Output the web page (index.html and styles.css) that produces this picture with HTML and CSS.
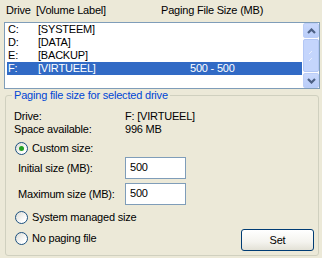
FILE: index.html
```html
<!DOCTYPE html>
<html>
<head>
<meta charset="utf-8">
<link rel="stylesheet" href="styles.css">
</head>
<body>
<div class="header">
  <span class="h1">Drive</span><span class="h2">[Volume Label]</span><span class="h3">Paging File Size (MB)</span>
</div>
<div class="list">
  <div class="rows">
    <div class="row"><span class="c1">C:</span><span class="c2">[SYSTEEM]</span><span class="c3"></span></div>
    <div class="row"><span class="c1">D:</span><span class="c2">[DATA]</span><span class="c3"></span></div>
    <div class="row"><span class="c1">E:</span><span class="c2">[BACKUP]</span><span class="c3"></span></div>
    <div class="row selected"><span class="c1">F:</span><span class="c2">[VIRTUEEL]</span><span class="c3">500 - 500</span></div>
  </div>
  <div class="scrollbar">
    <div class="sbtn"><svg width="9" height="6" viewBox="0 0 9 6"><polyline points="1,5 4.5,1.5 8,5" fill="none" stroke="#4D6185" stroke-width="2.2"/></svg></div>
    <div class="thumb">
      <svg width="6" height="14" viewBox="0 0 6 14"><line x1="1" y1="5" x2="4" y2="2" stroke="#E8EEFD" stroke-width="1"/><line x1="1" y1="12" x2="4" y2="9" stroke="#E8EEFD" stroke-width="1"/></svg>
    </div>
    <div class="sbtn"><svg width="9" height="6" viewBox="0 0 9 6"><polyline points="1,1 4.5,4.5 8,1" fill="none" stroke="#4D6185" stroke-width="2.2"/></svg></div>
  </div>
</div>
<fieldset class="group">
  <legend>Paging file size for selected drive</legend>
  <div class="info"><span class="lbl">Drive:</span><span>F: [VIRTUEEL]</span></div>
  <div class="info"><span class="lbl">Space available:</span><span>996 MB</span></div>
  <div class="radio r-custom"><span class="dot checked"></span><span>Custom size:</span></div>
  <div class="field f-initial"><span class="flbl">Initial size (MB):</span><span class="input">500</span></div>
  <div class="field f-max"><span class="flbl">Maximum size (MB):</span><span class="input">500</span></div>
  <div class="radio r-system"><span class="dot"></span><span>System managed size</span></div>
  <div class="lastrow">
    <div class="radio"><span class="dot"></span><span>No paging file</span></div>
    <div class="button">Set</div>
  </div>
</fieldset>
</body>
</html>
```

FILE: styles.css
```css
html, body {
  margin: 0;
  padding: 0;
}
body {
  width: 322px;
  height: 258px;
  background: #ECE9D8;
  font-family: "Liberation Sans", Arial, sans-serif;
  font-size: 11px;
  line-height: 13px;
  letter-spacing: -0.2px;
  color: #000;
  overflow: hidden;
}
.header {
  display: flex;
  height: 22px;
  padding: 4px 0 0 6px;
  box-sizing: border-box;
}
.h1 { width: 30px; }
.h2 { width: 125px; }
.list {
  display: flex;
  margin-left: 4px;
  width: 316px;
  height: 67px;
  box-sizing: border-box;
  border: 1px solid #7F9DB9;
  background: #fff;
}
.rows {
  flex: 1;
  padding: 0 1px 0 2px;
}
.row {
  display: flex;
  height: 13px;
  padding-left: 1px;
}
.row.selected {
  background: #316AC5;
  color: #fff;
}
.c1 { width: 30px; }
.c2 { width: 152px; }
.scrollbar {
  width: 16px;
  display: flex;
  flex-direction: column;
  gap: 1px;
  background: #FCFCFE;
}
.sbtn {
  height: 15px;
  box-sizing: border-box;
  border: 1px solid #BCCEF8;
  border-radius: 2px;
  background: linear-gradient(#C9D8FC, #B9CDF9);
  display: flex;
  align-items: center;
  justify-content: center;
}
.thumb {
  flex: 1;
  box-sizing: border-box;
  border: 1px solid #B3C7F5;
  border-radius: 2px;
  background: #C4D5FC;
  display: flex;
  align-items: center;
  justify-content: center;
}
.group {
  margin: 0 0 0 5px;
  width: 314px;
  height: 167px;
  box-sizing: border-box;
  border: 1px solid #D0D0BF;
  border-radius: 3px;
  padding: 0 4px 0 8px;
}
.group legend {
  color: #0046D5;
  padding: 0 2px;
  margin-left: -2px;
  line-height: 13px;
}
.info {
  display: flex;
  height: 13px;
}
.info:first-of-type { margin-top: 8px; }
.lbl { width: 111px; }
.radio {
  display: flex;
  align-items: center;
  gap: 4px;
  height: 13px;
  margin-left: 1px;
}
.r-custom { margin-top: 6px; }
.dot {
  width: 13px;
  height: 13px;
  box-sizing: border-box;
  border-radius: 50%;
  border: 1px solid #1C5180;
  background: linear-gradient(135deg, #DCDCD5, #FFFFFF 75%);
  display: flex;
  align-items: center;
  justify-content: center;
}
.dot.checked::after {
  content: "";
  width: 5px;
  height: 5px;
  border-radius: 50%;
  background: #21A121;
}
.field {
  display: flex;
  align-items: center;
  height: 22px;
  padding-left: 4px;
}
.f-initial { margin-top: 2px; }
.f-max { margin-top: 4px; }
.flbl { width: 107px; }
.input {
  width: 61px;
  height: 22px;
  box-sizing: border-box;
  border: 1px solid #7F9DB9;
  background: #fff;
  padding: 3px 0 0 4px;
}
.r-system { margin-top: 6px; }
.lastrow {
  display: flex;
  justify-content: space-between;
  align-items: flex-start;
  margin-top: 7px;
}
.lastrow .radio { margin-top: 1px; }
.button {
  width: 73px;
  height: 22px;
  margin-top: -2px;
  box-sizing: border-box;
  border: 1px solid #003C74;
  border-radius: 3px;
  background: linear-gradient(#FFFFFF, #F4F3EE 60%, #E3E1D6);
  text-align: center;
  line-height: 20px;
}
```
